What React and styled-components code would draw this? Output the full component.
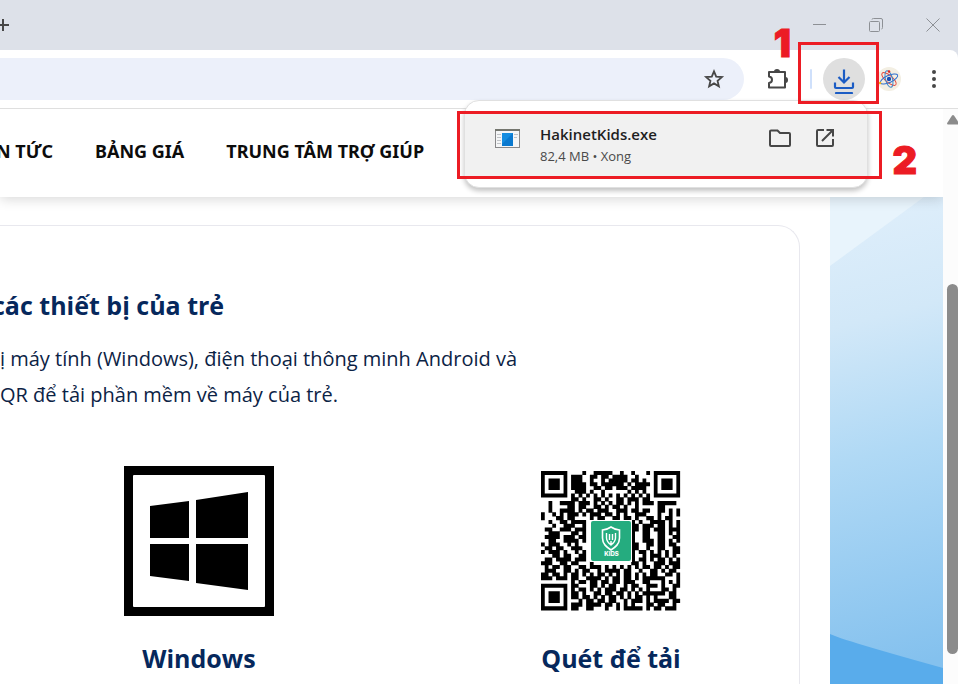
import React from 'react';
import styled, { createGlobalStyle } from 'styled-components';

const GlobalStyle = createGlobalStyle`
  * {
    box-sizing: border-box;
  }

  body {
    margin: 0;
    overflow: hidden;
    background: #fff;
    font-family: 'Open Sans', 'Noto Sans', sans-serif;
  }

  button {
    padding: 0;
    border: 0;
    background: none;
    font: inherit;
  }

  svg {
    display: block;
  }
`;

const Browser = styled.div`
  position: relative;
  height: 100vh;
  display: flex;
  flex-direction: column;
  overflow: hidden;
  background: #dde1e9;
`;

const TabBar = styled.div`
  height: 50px;
  flex: none;
  display: flex;
  align-items: center;
  justify-content: space-between;
`;

const NewTabButton = styled.button`
  margin-left: -4px;
`;

const WindowControls = styled.div`
  display: flex;
  gap: 7px;
`;

const WindowButton = styled.button`
  width: 50px;
  height: 50px;
  display: flex;
  align-items: center;
  justify-content: center;
`;

const Toolbar = styled.div`
  height: 59px;
  flex: none;
  display: flex;
  align-items: flex-start;
  padding: 8px 3px 0 0;
  gap: 3px;
  background: #fff;
  border-bottom: 1px solid #dfdfdf;
  border-radius: 0 8px 0 0;
`;

const Omnibox = styled.div`
  flex: 1;
  height: 42px;
  margin-right: 10px;
  padding-right: 9px;
  display: flex;
  justify-content: flex-end;
  background: #ecf0fa;
  border-radius: 0 21px 21px 0;
`;

const ToolButton = styled.button`
  width: 42px;
  height: 42px;
  display: flex;
  align-items: center;
  justify-content: center;
  border-radius: 50%;
  background: ${(props) => (props.$active ? '#dfdfdf' : 'transparent')};
`;

const Divider = styled.div`
  width: 2px;
  height: 20px;
  margin: 11px 8px;
  border-radius: 1px;
  background: #cfe0fb;
`;

const Viewport = styled.div`
  flex: 1;
  min-height: 0;
  display: flex;
  overflow: hidden;
  background: #fff;
`;

const Site = styled.div`
  flex: 1;
  min-width: 0;
  display: flex;
  flex-direction: column;
`;

const SiteHeader = styled.header`
  position: relative;
  height: 88px;
  flex: none;
  padding-bottom: 4px;
  background: #fff;
  box-shadow: 0 2px 12px rgba(0, 0, 0, 0.16);
`;

const Nav = styled.nav`
  height: 100%;
  display: flex;
  align-items: center;
  gap: 42px;
  margin-left: -4px;
`;

const NavLink = styled.a`
  color: #0c0c0c;
  font-family: 'Noto Sans', sans-serif;
  font-size: 18px;
  font-weight: 700;
  text-decoration: none;
  white-space: nowrap;
`;

const SiteBody = styled.div`
  flex: 1;
  min-height: 0;
  display: flex;
  gap: 30px;
`;

const Card = styled.main`
  flex: 1;
  min-width: 0;
  margin-top: 28px;
  padding: 59px 29px 0 0;
  border-top: 1px solid #e8e8ee;
  border-right: 1px solid #e8e8ee;
  border-radius: 0 22px 0 0;
  color: #06285c;
`;

const Title = styled.h2`
  margin: 0 0 16px -8px;
  font-size: 25px;
  font-weight: 700;
  line-height: 40px;
  white-space: nowrap;
`;

const Text = styled.p`
  margin: 0;
  color: #0c2345;
  font-size: 20px;
  line-height: 36px;
  white-space: nowrap;
`;

const Downloads = styled.div`
  margin: 53px 0 0 40px;
  display: grid;
  grid-template-columns: 1fr 1fr;
  column-gap: 94px;
`;

const Download = styled.figure`
  margin: 0;
  display: flex;
  flex-direction: column;
  align-items: center;
`;

const Caption = styled.figcaption`
  margin-top: 22px;
  font-size: 25px;
  font-weight: 700;
  line-height: 40px;
  white-space: nowrap;
`;

const Backdrop = styled.aside`
  width: 113px;
  flex: none;
`;

const Scrollbar = styled.div`
  position: relative;
  width: 15px;
  flex: none;
  display: flex;
  flex-direction: column;
  align-items: flex-end;
  padding: 6px 0 30px;
  background: #fcfcfc;
`;

const Thumb = styled.div`
  width: 11px;
  flex: 1;
  margin-top: 159px;
  border-radius: 6px;
  background: #8b8b8b;
`;

const Popup = styled.div`
  position: absolute;
  top: 100px;
  right: 90px;
  width: 404px;
  padding: 13px 0 9px;
  background: #fff;
  border: 1px solid #e0e0e0;
  border-radius: 15px;
  box-shadow: 0 3px 5px rgba(0, 0, 0, 0.24);
`;

const DownloadRow = styled.div`
  height: 64px;
  display: flex;
  align-items: flex-start;
  padding: 10px 30px 0;
  background: #f1f1f1;
`;

const FileIconSlot = styled.div`
  margin-top: 5px;
`;

const FileInfo = styled.div`
  flex: 1;
  margin-left: 20px;
`;

const FileName = styled.div`
  color: #1f1f1f;
  font-size: 15px;
  font-weight: 600;
  line-height: 20px;
`;

const FileMeta = styled.div`
  margin-top: 2px;
  color: #4a4a4a;
  font-size: 13px;
  line-height: 20px;
`;

const RowButton = styled.button`
  width: 24px;
  height: 24px;
  margin: 2px 0 0 21px;
`;

const Mark = styled.div`
  position: absolute;
  top: ${(props) => props.$top}px;
  right: ${(props) => props.$right}px;
  width: ${(props) => props.$width}px;
  height: ${(props) => props.$height}px;
  border: 3px solid #ec1c24;
  pointer-events: none;
`;

const MarkNumber = styled.span`
  position: absolute;
  top: ${(props) => props.$top}px;
  right: ${(props) => props.$right}px;
  color: #ec1c24;
  font-family: Inter, 'Liberation Sans', sans-serif;
  font-size: 38px;
  font-weight: 900;
  line-height: 40px;
  -webkit-text-stroke: 1px #ec1c24;
`;

// modules between the two top finder patterns, rows 0-6
const QR_TOP = [
  '....#..#####..#..#...#.',
  '.###..##.##.####..#....',
  '.###..#..#.#####.##.#..',
  '.####.##.######.#.####.',
  '.####..##.##.###.####..',
  '..###.#..#......#.#.#..',
  '.#.#.#.#.#.#.#.#.#.#.#.',
];

// full width rows 7-29
const QR_MIDDLE = [
  '........##.#..##.#..##.###.##........',
  '..#..####.###.#.#.#.##.#.#.###.#####.',
  '..#....##.##..##.#.##.#..#.....##....',
  '..#..####.#.##.###..###.##.##..##.#.#',
  '#..#.#.###.#.###.##.#.#..###...#..#.#',
  '#...##.##....#.##..##.##.#..##.#.##..',
  '..#..##.####............#.#..####.#.#',
  '...#..###..#............##.###.##.#.#',
  '.##..###.###............##.##.###.###',
  '..###...##.#............#..##..##.#.#',
  '.####.###.##............#..##..##..##',
  '..##..####.#............#..###.##.#.#',
  '#.###..#.#..............##..##.##.##.',
  '.##.##..###.............##..#..##..##',
  '#.###.#..#.#............#.##.#.#.#.##',
  '...##.##..##............#..#.###.#.#.',
  '.##.####.###............#.##.#.##.#.#',
  '###..##.##...#..........##.#..###.###',
  '.#.##.##..##.###.#.#.#.#.#.##.##.#.##',
  '.###..##.#.##..#.####.##..#..##.#.##.',
  '##.##.#.##.#.#.##.#.#.##.#.#.##..##.#',
  '###.###.##..####.#.##.##.#.######...#',
  '........#.##.##.##.##.###..##...#.#.#',
];

// right of the bottom finder pattern, rows 30-36
const QR_BOTTOM = [
  '.##...##.#.##..#.##..###.#..##',
  '.#.##.#.#.###.##.#.#.#...##.#.',
  '.##.#..##.##.##.#.#.######.##.',
  '.##.##.#.#.##.#.#.##.#.#...##.',
  '...#.##.##.##..#.###.#.####.##',
  '.###.####.##.#.#.#...##.##..#.',
  '.##..##...#..#.#####.#.##.###.',
];

const FINDER = ['#######', '#.....#', '#.###.#', '#.###.#', '#.###.#', '#.....#', '#######'];

const QR_ROWS = [
  ...QR_TOP.map((row, i) => FINDER[i] + row + FINDER[i]),
  ...QR_MIDDLE,
  ...QR_BOTTOM.map((row, i) => FINDER[i] + row),
];

// one rectangle per run of dark modules, a little taller than a row so that no seams show
const QR_PATH = QR_ROWS.map((row, y) =>
  [...row.matchAll(/#+/g)]
    .map((run) => `M${run.index} ${y}h${run[0].length}v1.08h-${run[0].length}z`)
    .join('')
).join('');

function QrCode() {
  return (
    <svg width="150" height="150" viewBox="-5 -5 150 150" role="img" aria-label="QR">
      <path d={QR_PATH} transform="scale(3.76)" />
      <rect x="49" y="49" width="42" height="42" fill="#fff" />
      <rect x="50" y="50" width="40" height="40" rx="2" fill="#25ac7f" />
      <path
        d="M70 56c3 2 6 3 8.500 3v8c0 6-4 9-8.500 12-4.500-3-8.500-6-8.500-12v-8c2.500 0 5.500-1 8.500-3z"
        fill="none"
        stroke="#fff"
        strokeWidth="1.600"
      />
      <path
        d="M65.500 62v5c0 3 2 5 4.500 7 2.500-2 4.500-4 4.500-7v-5M68.500 63v6M71.500 63v6M70 70v4"
        fill="none"
        stroke="#fff"
        strokeWidth="1.400"
      />
      <text
        x="70.500"
        y="85"
        fill="#fff"
        textAnchor="middle"
        fontFamily="Inter, sans-serif"
        fontSize="6"
        fontWeight="800"
      >
        KIDS
      </text>
    </svg>
  );
}

function WindowsLogo() {
  return (
    <svg width="150" height="150" viewBox="0 0 150 150" role="img" aria-label="Windows">
      <rect width="150" height="150" />
      <rect x="9" y="9" width="132" height="132" rx="1" fill="#fff" />
      <path d="M26 40l39-5v37H26zM72 34l52-8v46H72zM26 78h39v37l-39-5zM72 78h52v46l-52-7z" />
    </svg>
  );
}

function StarIcon() {
  return (
    <svg width="22" height="22" viewBox="0 0 24 24" fill="none" stroke="#474747" strokeWidth="2">
      <path d="M12 3.700l2.400 5.700 6.200.5-4.700 4.100 1.400 6L12 16.800 6.700 20l1.400-6-4.700-4.100 6.200-.5z" />
    </svg>
  );
}

function PuzzleIcon() {
  return (
    <svg width="22" height="24" viewBox="0 0 22 24" fill="none">
      <path
        d="M2 5h16v15.500H2v-4.500c4-.5 4-6 0-6.500z"
        stroke="#474747"
        strokeWidth="2"
        strokeLinejoin="round"
      />
      <path d="M7 4.500a3 2.500 0 0 1 6 0zM18.500 10a2.500 3 0 0 1 0 6z" fill="#474747" />
    </svg>
  );
}

function DownloadIcon() {
  return (
    <svg width="22" height="30" viewBox="0 0 22 30" fill="none" stroke="#1b5cc4" strokeWidth="2.200">
      <path d="M11 5.500v13M5.500 13l5.500 5.500 5.500-5.500M2 18.500V23a1 1 0 0 0 1 1h16a1 1 0 0 0 1-1v-4.500" />
      <path d="M3 29h16" strokeLinecap="round" />
    </svg>
  );
}

function AtomIcon() {
  return (
    <svg width="24" height="24" viewBox="0 0 24 24" fill="none" strokeWidth="1">
      <circle cx="12" cy="12" r="12" fill="#f3efe3" />
      <ellipse cx="12" cy="12" rx="9" ry="3.500" stroke="#e6483d" transform="rotate(40 12 12)" />
      <ellipse cx="12" cy="12" rx="9.500" ry="3.500" stroke="#2f6fd0" transform="rotate(-25 12 12)" />
      <ellipse cx="12" cy="12" rx="8.500" ry="3.500" stroke="#3f86c8" transform="rotate(75 12 12)" />
      <circle cx="12" cy="12" r="2.200" fill="#174fb8" />
      <circle cx="12" cy="4.500" r="1.300" fill="#e2271d" />
      <circle cx="3" cy="16" r="1.300" fill="#f1b51c" />
    </svg>
  );
}

function AppFileIcon() {
  return (
    <svg width="25" height="20" viewBox="0 0 25 20">
      <rect x="0.500" y="0.500" width="24" height="18" fill="#f5f6f7" stroke="#88888a" />
      <path d="M0 0h25v2H0z" fill="#74766f" />
      <path d="M2 5.500h4M2 8.500h4M2 11.500h4M2 14.500h4M19 5.500h4M19 8.500h3" stroke="#c0c3c7" />
      <rect x="7" y="4" width="11" height="13" fill="#0a79cf" />
      <path d="M7 4h11L7 15z" fill="#158de0" />
    </svg>
  );
}

export default function App() {
  return (
    <>
      <GlobalStyle />
      <Browser>
        <TabBar>
          <NewTabButton aria-label="New tab">
            <svg width="14" height="14" viewBox="0 0 14 14" stroke="#474747" strokeWidth="2">
              <path d="M7 1v12M1 7h12" />
            </svg>
          </NewTabButton>
          <WindowControls>
            <WindowButton aria-label="Minimize">
              <svg width="13" height="13" viewBox="0 0 13 13" stroke="#8d9095">
                <path d="M0 5.500h13" />
              </svg>
            </WindowButton>
            <WindowButton aria-label="Restore">
              <svg width="14" height="14" viewBox="0 0 14 14" fill="none" stroke="#8d9095">
                <rect x="0.500" y="3.500" width="10" height="10" rx="1" />
                <path d="M3 1.500Q3 .5 4.500 .5H12q1.500 0 1.500 1.500v7.500q0 1.500-1 1.500" />
              </svg>
            </WindowButton>
            <WindowButton aria-label="Close">
              <svg width="14" height="14" viewBox="0 0 14 14" stroke="#8d9095">
                <path d="M.5 .5l13 13M13.500 .5l-13 13" />
              </svg>
            </WindowButton>
          </WindowControls>
        </TabBar>

        <Toolbar>
          <Omnibox>
            <ToolButton aria-label="Bookmark">
              <StarIcon />
            </ToolButton>
          </Omnibox>
          <ToolButton aria-label="Extensions">
            <PuzzleIcon />
          </ToolButton>
          <Divider />
          <ToolButton $active aria-label="Downloads">
            <DownloadIcon />
          </ToolButton>
          <ToolButton aria-label="Profile">
            <AtomIcon />
          </ToolButton>
          <ToolButton aria-label="Menu">
            <svg width="4" height="18" viewBox="0 0 4 18" fill="#474747">
              <circle cx="2" cy="2" r="2" />
              <circle cx="2" cy="9" r="2" />
              <circle cx="2" cy="16" r="2" />
            </svg>
          </ToolButton>
        </Toolbar>

        <Viewport>
          <Site>
            <SiteHeader>
              <Nav>
                <NavLink href="#tin-tuc">N TỨC</NavLink>
                <NavLink href="#bang-gia">BẢNG GIÁ</NavLink>
                <NavLink href="#tro-giup">TRUNG TÂM TRỢ GIÚP</NavLink>
              </Nav>
            </SiteHeader>
            <SiteBody>
              <Card>
                <Title>các thiết bị của trẻ</Title>
                <Text>
                  ị máy tính (Windows), điện thoại thông minh Android và
                  <br />
                  QR để tải phần mềm về máy của trẻ.
                </Text>
                <Downloads>
                  <Download>
                    <WindowsLogo />
                    <Caption>Windows</Caption>
                  </Download>
                  <Download>
                    <QrCode />
                    <Caption>Quét để tải</Caption>
                  </Download>
                </Downloads>
              </Card>
              <Backdrop>
                <svg width="100%" height="100%" viewBox="0 0 113 487" preserveAspectRatio="none">
                  <defs>
                    <linearGradient id="sky" x1="0" y1="0" x2="0.060" y2="1">
                      <stop offset="0" stopColor="#e0effb" />
                      <stop offset="0.270" stopColor="#d2e8f8" />
                      <stop offset="0.550" stopColor="#b0d9f5" />
                      <stop offset="1" stopColor="#84c1ee" />
                    </linearGradient>
                  </defs>
                  <rect width="113" height="487" fill="url(#sky)" />
                  <path d="M0 0h94L0 69z" fill="#e8f4fc" />
                  <path d="M0 437q12 6 113 34v16H0z" fill="#59aceb" />
                </svg>
              </Backdrop>
            </SiteBody>
          </Site>
          <Scrollbar>
            <svg width="11" height="10" viewBox="0 0 11 10" fill="#8b8b8b">
              <path d="M5 .5q1-.8 2 0l5 7.500q.5 1.500-1 1.500H1Q-.3 9.500.2 8z" />
            </svg>
            <Thumb />
          </Scrollbar>
        </Viewport>

        <Popup>
          <DownloadRow>
            <FileIconSlot>
              <AppFileIcon />
            </FileIconSlot>
            <FileInfo>
              <FileName>HakinetKids.exe</FileName>
              <FileMeta>82,4 MB • Xong</FileMeta>
            </FileInfo>
            <RowButton aria-label="Show in folder">
              <svg width="24" height="24" viewBox="0 0 24 24" fill="none" stroke="#474747" strokeWidth="2">
                <path d="M3 4.500h6.500l2.500 2.500h9a1 1 0 0 1 1 1v11a1 1 0 0 1-1 1H3a1 1 0 0 1-1-1v-13.500a1 1 0 0 1 1-1z" />
              </svg>
            </RowButton>
            <RowButton aria-label="Open">
              <svg width="24" height="24" viewBox="0 0 24 24" fill="none" stroke="#474747" strokeWidth="2">
                <path d="M11 4H5a1 1 0 0 0-1 1v14a1 1 0 0 0 1 1h14a1 1 0 0 0 1-1v-6M13.500 4H20v6.500M20 4L9 15" />
              </svg>
            </RowButton>
          </DownloadRow>
        </Popup>

        <Mark $top={42} $right={79} $width={81} $height={62} />
        <Mark $top={111} $right={76} $width={425} $height={68} />
        <MarkNumber $top={23} $right={167}>1</MarkNumber>
        <MarkNumber $top={140} $right={41}>2</MarkNumber>
      </Browser>
    </>
  );
}
